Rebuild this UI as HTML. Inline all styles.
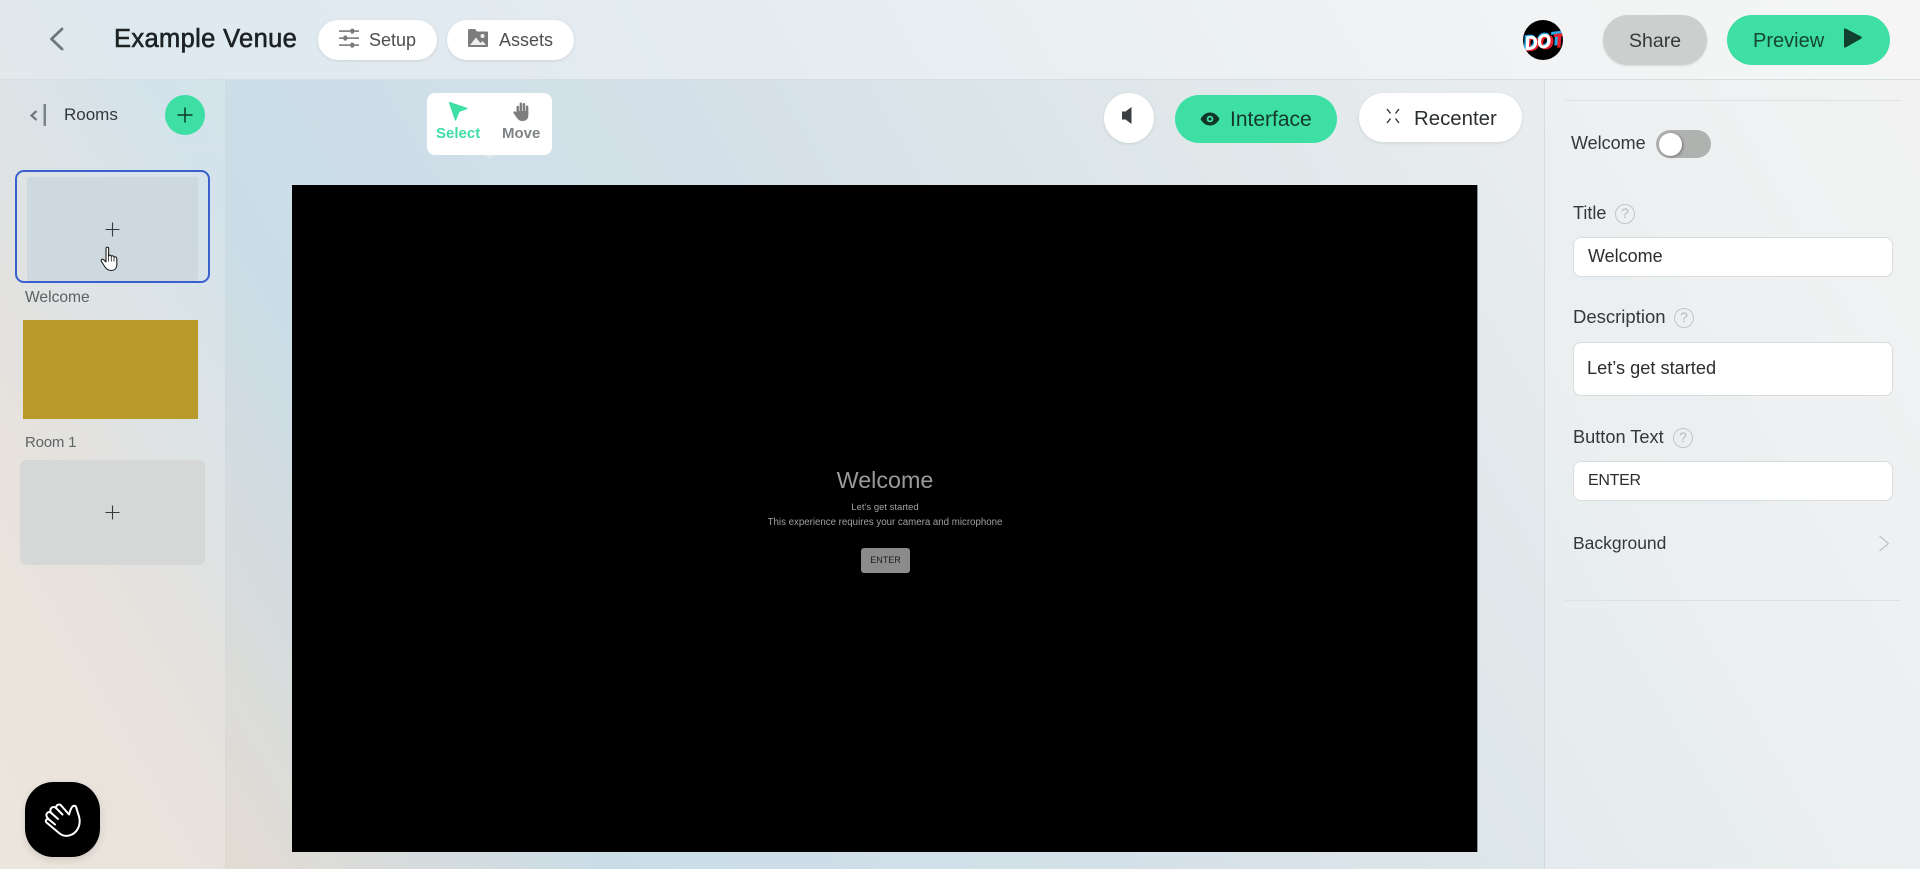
<!DOCTYPE html>
<html lang="en">
<head>
<meta charset="utf-8">
<title>Example Venue</title>
<style>
html,body{margin:0;padding:0;width:1920px;height:869px;overflow:hidden}
body{position:relative;font-family:"Liberation Sans",sans-serif;color:#25292b;background:linear-gradient(60deg,#e9e0d4 0%,#e2dbd4 10%,#cadde7 25%,#d6e1e9 50%,#dde6e9 62%,#e8ecee 80%,#f0f0ef 100%)}
div,span,svg{position:absolute;display:block;box-sizing:border-box}
.t{white-space:nowrap;line-height:1}
.pill{background:#fff;border-radius:25px;box-shadow:0 1px 3px rgba(0,0,0,.1)}
.inp{left:1573px;width:320px;background:#fff;border:1px solid #d9dcdc;border-radius:8px}
.lab{left:1573px;font-size:18px;color:#33383a}
.hlp{width:20px;height:20px;border:1.5px solid #c2c6c6;border-radius:50%;color:#b4b8b8;font-size:14px;line-height:17px;text-align:center}
.hr{left:1565px;width:335px;height:1px;background:#dce1e2}
</style>
</head>
<body>
<!-- header -->
<div style="left:0;top:0;width:1920px;height:80px;background:rgba(255,255,255,.36);border-bottom:1px solid #d5dee3"></div>
<svg style="left:46px;top:26px" width="20" height="26" viewBox="0 0 20 26"><path d="M16 3 5.500 13 16 23" fill="none" stroke="#6d777c" stroke-width="2.800" stroke-linecap="round" stroke-linejoin="round"/></svg>
<span class="t" style="left:114px;top:26.500px;font-size:25.500px;letter-spacing:.35px;color:#1d2224;-webkit-text-stroke:.6px #1d2224">Example Venue</span>

<div class="pill" style="left:318px;top:20px;width:119px;height:40px"></div>
<svg style="left:338px;top:27px" width="22" height="22" viewBox="0 0 22 22" fill="#7a7a7a"><rect x="1" y="3.300" width="20" height="1.600"/><rect x="1" y="10.300" width="20" height="1.600"/><rect x="1" y="17.300" width="20" height="1.600"/><rect x="12.500" y="1.600" width="3.600" height="5" rx="1.200"/><rect x="5.500" y="8.600" width="3.600" height="5" rx="1.200"/><rect x="12.500" y="15.600" width="3.600" height="5" rx="1.200"/></svg>
<span class="t" style="left:369px;top:30.500px;font-size:18px;color:#4b4f51">Setup</span>

<div class="pill" style="left:447px;top:20px;width:127px;height:40px"></div>
<svg style="left:467px;top:28px" width="22" height="20" viewBox="0 0 22 20"><path d="M1 2.500C1 1.500 1.600 1 2.500 1H8L10 3.500H20C20.800 3.500 21 4 21 4.800V18C21 18.800 20.600 19 20 19H2C1.400 19 1 18.600 1 18Z" fill="#7c7c7c"/><circle cx="15.500" cy="8" r="2" fill="#eee"/><path d="M3 17 9 9.500 13.500 15 15.500 13 19 17Z" fill="#eee"/></svg>
<span class="t" style="left:499px;top:30.500px;font-size:18px;color:#4b4f51">Assets</span>

<svg style="left:1523px;top:20px" width="40" height="40" viewBox="0 0 40 40"><defs><clipPath id="c"><circle cx="20" cy="20" r="20"/></clipPath></defs><circle cx="20" cy="20" r="20" fill="#000"/><g clip-path="url(#c)" font-family="Liberation Sans" font-weight="700" font-style="italic" font-size="19" stroke-width=".8"><text x="0" y="26.500" fill="#2aa8e8" stroke="#2aa8e8" transform="rotate(-7 20 20)" textLength="39" lengthAdjust="spacingAndGlyphs">DOT</text><text x="2.500" y="29" fill="#e8202c" stroke="#e8202c" transform="rotate(-7 20 20)" textLength="39" lengthAdjust="spacingAndGlyphs">DOT</text><text x="1.500" y="27.800" fill="#fff" stroke="#fff" transform="rotate(-7 20 20)" textLength="26" lengthAdjust="spacingAndGlyphs">DO</text></g></svg>

<div style="left:1603px;top:15px;width:104px;height:50px;border-radius:25px;background:#cdcfce;box-shadow:0 1px 2px rgba(0,0,0,.12)"></div>
<span class="t" style="left:1629px;top:31.500px;font-size:19.500px;color:#34393a">Share</span>
<div style="left:1727px;top:15px;width:163px;height:50px;border-radius:25px;background:#3ddfa5"></div>
<span class="t" style="left:1753px;top:31px;font-size:20px;color:#174536">Preview</span>
<svg style="left:1843px;top:27px" width="20" height="22" viewBox="0 0 20 22"><path d="M2.500 1.500 18 9.500C19 10.200 19 11 18 11.700L2.500 20.500C1.800 20.800 1 20.500 1 19.500V2.500C1 1.500 1.800 1.200 2.500 1.500Z" fill="#113f30"/></svg>

<!-- left sidebar -->
<div style="left:0;top:80px;width:226px;height:789px;background:rgba(255,255,255,.2);border-right:1px solid rgba(190,200,205,.35)"></div>
<div style="left:0;top:149px;width:225px;height:1px;background:rgba(220,226,230,.5)"></div>
<svg style="left:28px;top:103px" width="20" height="24" viewBox="0 0 20 24"><path d="M8.500 8 3.500 12.500 8.500 17" fill="none" stroke="#6d777c" stroke-width="2.200"/><rect x="15.500" y="1" width="2.500" height="22" fill="#7b8589"/></svg>
<span class="t" style="left:64px;top:105.500px;font-size:17px;color:#33383a">Rooms</span>
<div style="left:165px;top:95px;width:40px;height:40px;border-radius:50%;background:#3ddfa5"></div>
<svg style="left:176px;top:106px" width="18" height="18" viewBox="0 0 18 18"><path d="M9 1.500V16.500M1.500 9H16.500" stroke="#12382c" stroke-width="1.500"/></svg>

<div style="left:15px;top:170px;width:195px;height:113px;border:2px solid #3a60cf;border-radius:9px"></div>
<div style="left:27px;top:177px;width:171px;height:104px;background:#cdd8df;border-radius:3px"></div>
<svg style="left:105px;top:222px" width="15" height="15" viewBox="0 0 15 15"><path d="M7.500 .5V14.500M.5 7.500H14.500" stroke="#33393c" stroke-width="1.100"/></svg>
<svg style="left:100px;top:246px" width="20" height="26" viewBox="0 0 20 26"><path d="M6 2.500C6 .8 8.600 .8 8.600 2.500V10C9.500 8.800 11 9 11.300 10.200 12.300 9.400 13.600 9.800 14 11 15.200 10.400 16.800 11 16.800 12.800V18.500C16.800 22 14.800 24.500 11 24.500 8 24.500 6.500 23.200 5 21L1.500 15.500C.5 13.800 2.500 12.400 3.800 13.800L6 16Z" fill="#fff" stroke="#1e1e1e" stroke-width="1.100" stroke-linejoin="round"/><path d="M8.600 10V15.500M11.300 10.500V15.500M14 11V15.500" stroke="#1e1e1e" stroke-width=".8"/></svg>
<span class="t" style="left:25px;top:289.500px;font-size:15.600px;color:#5b6266">Welcome</span>
<div style="left:23px;top:320px;width:175px;height:98.500px;background:#b89a28"></div>
<span class="t" style="left:25px;top:434.500px;font-size:15px;letter-spacing:-.2px;color:#5f6466">Room 1</span>
<div style="left:20px;top:460px;width:185px;height:105px;background:#d6d8d8;border-radius:6px"></div>
<svg style="left:105px;top:505px" width="15" height="15" viewBox="0 0 15 15"><path d="M7.500 .5V14.500M.5 7.500H14.500" stroke="#33393c" stroke-width="1.100"/></svg>

<div style="left:25px;top:782px;width:75px;height:75px;background:#000;border-radius:38% / 38%;box-shadow:0 3px 8px rgba(0,0,0,.12)"></div>
<svg style="left:44px;top:802px" width="37" height="36" viewBox="0 0 37 36"><path d="M15 31 2.500 20.500C.8 18.800 2.800 16 5 17.500 2 15 1.800 12.500 3.200 11 4.500 9.500 6 10 7 10.800 5.800 8.500 6.500 6 8.500 5.200 9.800 4.800 11 5.200 12 6 12 3.500 14 1.800 16.500 2.800L25 12.500C26 9 27 6 28.500 4.500 30 3 32 4 32.300 5.500 33 9 35 13 35.500 17 36.500 25 32 32 25 33.500 21 34.500 18 33.500 15 31Z" fill="none" stroke="#fff" stroke-width="2" stroke-linejoin="round"/><path d="M5 17.500 11 22.500M7 10.800 14 17M12 6 18.500 12.500" fill="none" stroke="#fff" stroke-width="2" stroke-linecap="round"/></svg>

<!-- main toolbar -->
<div style="left:427px;top:93px;width:125px;height:62px;background:#fff;border-radius:8px"></div>
<svg style="left:484px;top:155px" width="12" height="4" viewBox="0 0 12 4"><path d="M1 0 6 4 11 0Z" fill="#fff" opacity=".3"/></svg>
<svg style="left:448px;top:101px" width="21" height="21" viewBox="0 0 21 21"><path d="M1.500 1.500 19 7.500 11 10.500 7.500 19Z" fill="#3ddfa5" stroke="#3ddfa5" stroke-width="1.200" stroke-linejoin="round"/></svg>
<span class="t" style="left:436px;top:125.500px;font-size:15px;font-weight:700;color:#3ddfa5">Select</span>
<svg style="left:513px;top:102px" width="17" height="19" viewBox="0 0 17 19" fill="#7e7e7e"><rect x="3.500" y="3.800" width="2.500" height="8" rx="1.200"/><rect x="6.600" y=".5" width="2.500" height="11" rx="1.200"/><rect x="9.700" y="1" width="2.500" height="11" rx="1.200"/><rect x="12.800" y="3.500" width="2.500" height="9" rx="1.200"/><path d="M3.500 9H15.300V14C15.300 17 13 19 9.500 19 7 19 5.500 18 4 16L.6 11.300C-.2 10 1.500 8.600 2.800 9.700L3.500 10.500Z"/></svg>
<span class="t" style="left:502px;top:125.500px;font-size:15px;font-weight:700;color:#7f8385">Move</span>

<div class="pill" style="left:1104px;top:93px;width:50px;height:50px"></div>
<svg style="left:1121px;top:106px" width="12" height="19" viewBox="0 0 12 19"><path d="M1 5.500H4.500L10.500 1V18L4.500 13.500H1Z" fill="#3a3e40"/></svg>
<div style="left:1175px;top:95px;width:162px;height:48px;border-radius:24px;background:#3ddfa5"></div>
<svg style="left:1200px;top:109px" width="20" height="20" viewBox="0 0 20 20"><path d="M.5 10C3 5.500 6.300 3.500 10 3.500S17 5.500 19.500 10C17 14.500 13.700 16.500 10 16.500S3 14.500 .5 10Z" fill="#123529"/><circle cx="10" cy="10" r="3.300" fill="#3ddfa5"/><circle cx="10" cy="10" r="1.500" fill="#123529"/></svg>
<span class="t" style="left:1230px;top:109px;font-size:21px;color:#16382e">Interface</span>
<div class="pill" style="left:1359px;top:93px;width:163px;height:49px"></div>
<svg style="left:1386px;top:108px" width="14" height="16" viewBox="0 0 14 16" fill="none" stroke="#2a2e30" stroke-width="1.300"><path d="M1 1 4.500 5.500M13 1 9.500 5.500M1 15 4.500 10.500M13 15 9.500 10.500"/></svg>
<span class="t" style="left:1414px;top:109px;font-size:20.400px;color:#2a2e30">Recenter</span>

<!-- canvas -->
<div style="left:292px;top:185px;width:1185.500px;height:667px;background:#000;border-right:1px solid #8d9396"></div>
<span class="t" style="left:836px;top:468.500px;width:98px;text-align:center;font-size:23.300px;color:#9a9a9a">Welcome</span>
<span class="t" style="left:785px;top:503px;width:200px;text-align:center;font-size:9.500px;color:#a0a0a0">Let’s get started</span>
<span class="t" style="left:735px;top:518px;width:300px;text-align:center;font-size:9.700px;color:#a0a0a0">This experience requires your camera and microphone</span>
<div style="left:861px;top:548px;width:49px;height:24.500px;background:#8b8b8b;border-radius:3px"></div>
<span class="t" style="left:861px;top:556px;width:49px;text-align:center;font-size:9px;color:#1e1e1e">ENTER</span>

<!-- right panel -->
<div style="left:1544px;top:80px;width:376px;height:789px;background:rgba(255,255,255,.2);border-left:1px solid rgba(195,202,205,.55)"></div>
<div class="hr" style="top:100px"></div>
<span class="t" style="left:1571px;top:134px;font-size:18px;color:#33383a">Welcome</span>
<div style="left:1656px;top:130px;width:55px;height:28px;border-radius:14px;background:#b0b2b0"></div>
<div style="left:1659px;top:133px;width:23px;height:22.500px;border-radius:50%;background:#fff;box-shadow:1px 1px 3px rgba(0,0,0,.35)"></div>

<span class="t lab" style="top:204px">Title</span>
<div class="hlp" style="left:1615px;top:204px">?</div>
<div class="inp" style="top:237px;height:40px"></div>
<span class="t" style="left:1588px;top:247px;font-size:18px;color:#2a2e30">Welcome</span>

<span class="t lab" style="top:308px;font-size:18.500px">Description</span>
<div class="hlp" style="left:1674px;top:308px">?</div>
<div class="inp" style="top:342px;height:54px"></div>
<span class="t" style="left:1587px;top:359px;font-size:18.200px;color:#2a2e30">Let’s get started</span>

<span class="t lab" style="top:428px;font-size:18.200px">Button Text</span>
<div class="hlp" style="left:1673px;top:428px">?</div>
<div class="inp" style="top:461px;height:40px"></div>
<span class="t" style="left:1588px;top:473px;font-size:16px;letter-spacing:-.3px;color:#2a2e30">ENTER</span>

<span class="t lab" style="top:535px;font-size:17.500px">Background</span>
<svg style="left:1878px;top:535px" width="12" height="17" viewBox="0 0 12 17"><path d="M1.500 1 10.500 8.500 1.500 16" fill="none" stroke="#bfc3c4" stroke-width="1.200"/></svg>
<div class="hr" style="top:600px"></div>
</body>
</html>
